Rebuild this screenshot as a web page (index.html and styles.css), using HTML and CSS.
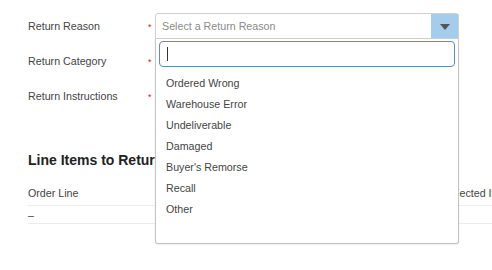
FILE: index.html
```html
<!DOCTYPE html>
<html>
<head>
    <title>Return</title>
    <link rel="stylesheet" href="styles.css">
</head>
<body>
    <div class="page">
        <div class="form">
            <div class="form-row">
                <label class="label">Return Reason</label>
                <span class="req">*</span>
                <div class="select">
                    <div class="select-box">
                        <span class="placeholder">Select a Return Reason</span>
                        <span class="arrow"><span class="tri"></span></span>
                    </div>
                    <div class="dropdown">
                        <div class="search"><span class="caret"></span></div>
                        <ul class="options">
                            <li>Ordered Wrong</li>
                            <li>Warehouse Error</li>
                            <li>Undeliverable</li>
                            <li>Damaged</li>
                            <li>Buyer's Remorse</li>
                            <li>Recall</li>
                            <li>Other</li>
                        </ul>
                    </div>
                </div>
            </div>
            <div class="form-row">
                <label class="label">Return Category</label>
                <span class="req">*</span>
                <div class="field"></div>
            </div>
            <div class="form-row">
                <label class="label">Return Instructions</label>
                <span class="req">*</span>
                <div class="field"></div>
            </div>
        </div>

        <h2 class="section-title">Line Items to Return</h2>
        <div class="table">
            <div class="tr th">
                <div class="cell">Order Line</div>
                <div class="cell">Selected Items</div>
            </div>
            <div class="tr">
                <div class="cell">–</div>
                <div class="cell"></div>
            </div>
        </div>
    </div>
</body>
</html>
```

FILE: styles.css
```css
html {
    overflow: hidden;
}
body {
    margin: 0;
    min-height: 270px;
    background: #fff;
    font-family: "Liberation Sans", Arial, sans-serif;
    font-size: 10.7px;
    color: #444;
}
.page {
    padding: 13px 0 0 28px;
}
.form {
    display: flex;
    flex-direction: column;
    gap: 9px;
}
.form-row {
    display: flex;
    align-items: center;
    height: 26px;
}
.label {
    width: 120px;
    color: #444;
}
.req {
    width: 7px;
    color: #e02020;
    font-size: 9px;
    line-height: 9px;
    padding-top: 2px;
}
.field {
    width: 304px;
    height: 26px;
}
.select {
    position: relative;
    width: 304px;
    z-index: 2;
}
.select-box {
    display: flex;
    height: 24px;
    border: 1px solid #cfcfcf;
    border-radius: 3px 3px 0 0;
    background: #fff;
}
.placeholder {
    flex: 1;
    padding-left: 6px;
    line-height: 24px;
    color: #8a8a8a;
}
.arrow {
    width: 27px;
    background: #a4cced;
    display: flex;
    align-items: center;
    justify-content: center;
}
.tri {
    width: 0;
    height: 0;
    border-left: 5px solid transparent;
    border-right: 5px solid transparent;
    border-top: 6px solid #555;
    margin-top: 1px;
}
.dropdown {
    position: absolute;
    top: 26px;
    left: 0;
    width: 296px;
    height: 202px;
    background: #fff;
    border: 1px solid #c4c4c4;
    border-top: none;
    border-radius: 0 0 3px 3px;
    box-shadow: 0 1px 2px rgba(0,0,0,0.08);
    padding: 2px 3px 0 3px;
}
.search {
    height: 24px;
    border: 1px solid #5b8bd0;
    border-radius: 4px;
    display: flex;
    align-items: center;
    padding-left: 7px;
}
.caret {
    width: 1px;
    height: 14px;
    background: #333;
}
.options {
    list-style: none;
    margin: 6px 0 0 0;
    padding: 0;
}
.options li {
    line-height: 21px;
    padding-left: 7px;
    color: #444;
}
.section-title {
    margin: 43px 0 14px 0;
    font-size: 14px;
    line-height: 16px;
    font-weight: bold;
    color: #222;
}
.table {
    width: 600px;
}
.tr {
    display: grid;
    grid-template-columns: 416px 1fr;
    border-bottom: 1px solid #ececec;
}
.th .cell {
    padding: 3px 0 4px 0;
    line-height: 16px;
}
.tr .cell {
    line-height: 16px;
}
.tr:not(.th) .cell {
    padding: 1px 0 0 0;
    height: 16px;
}
```
